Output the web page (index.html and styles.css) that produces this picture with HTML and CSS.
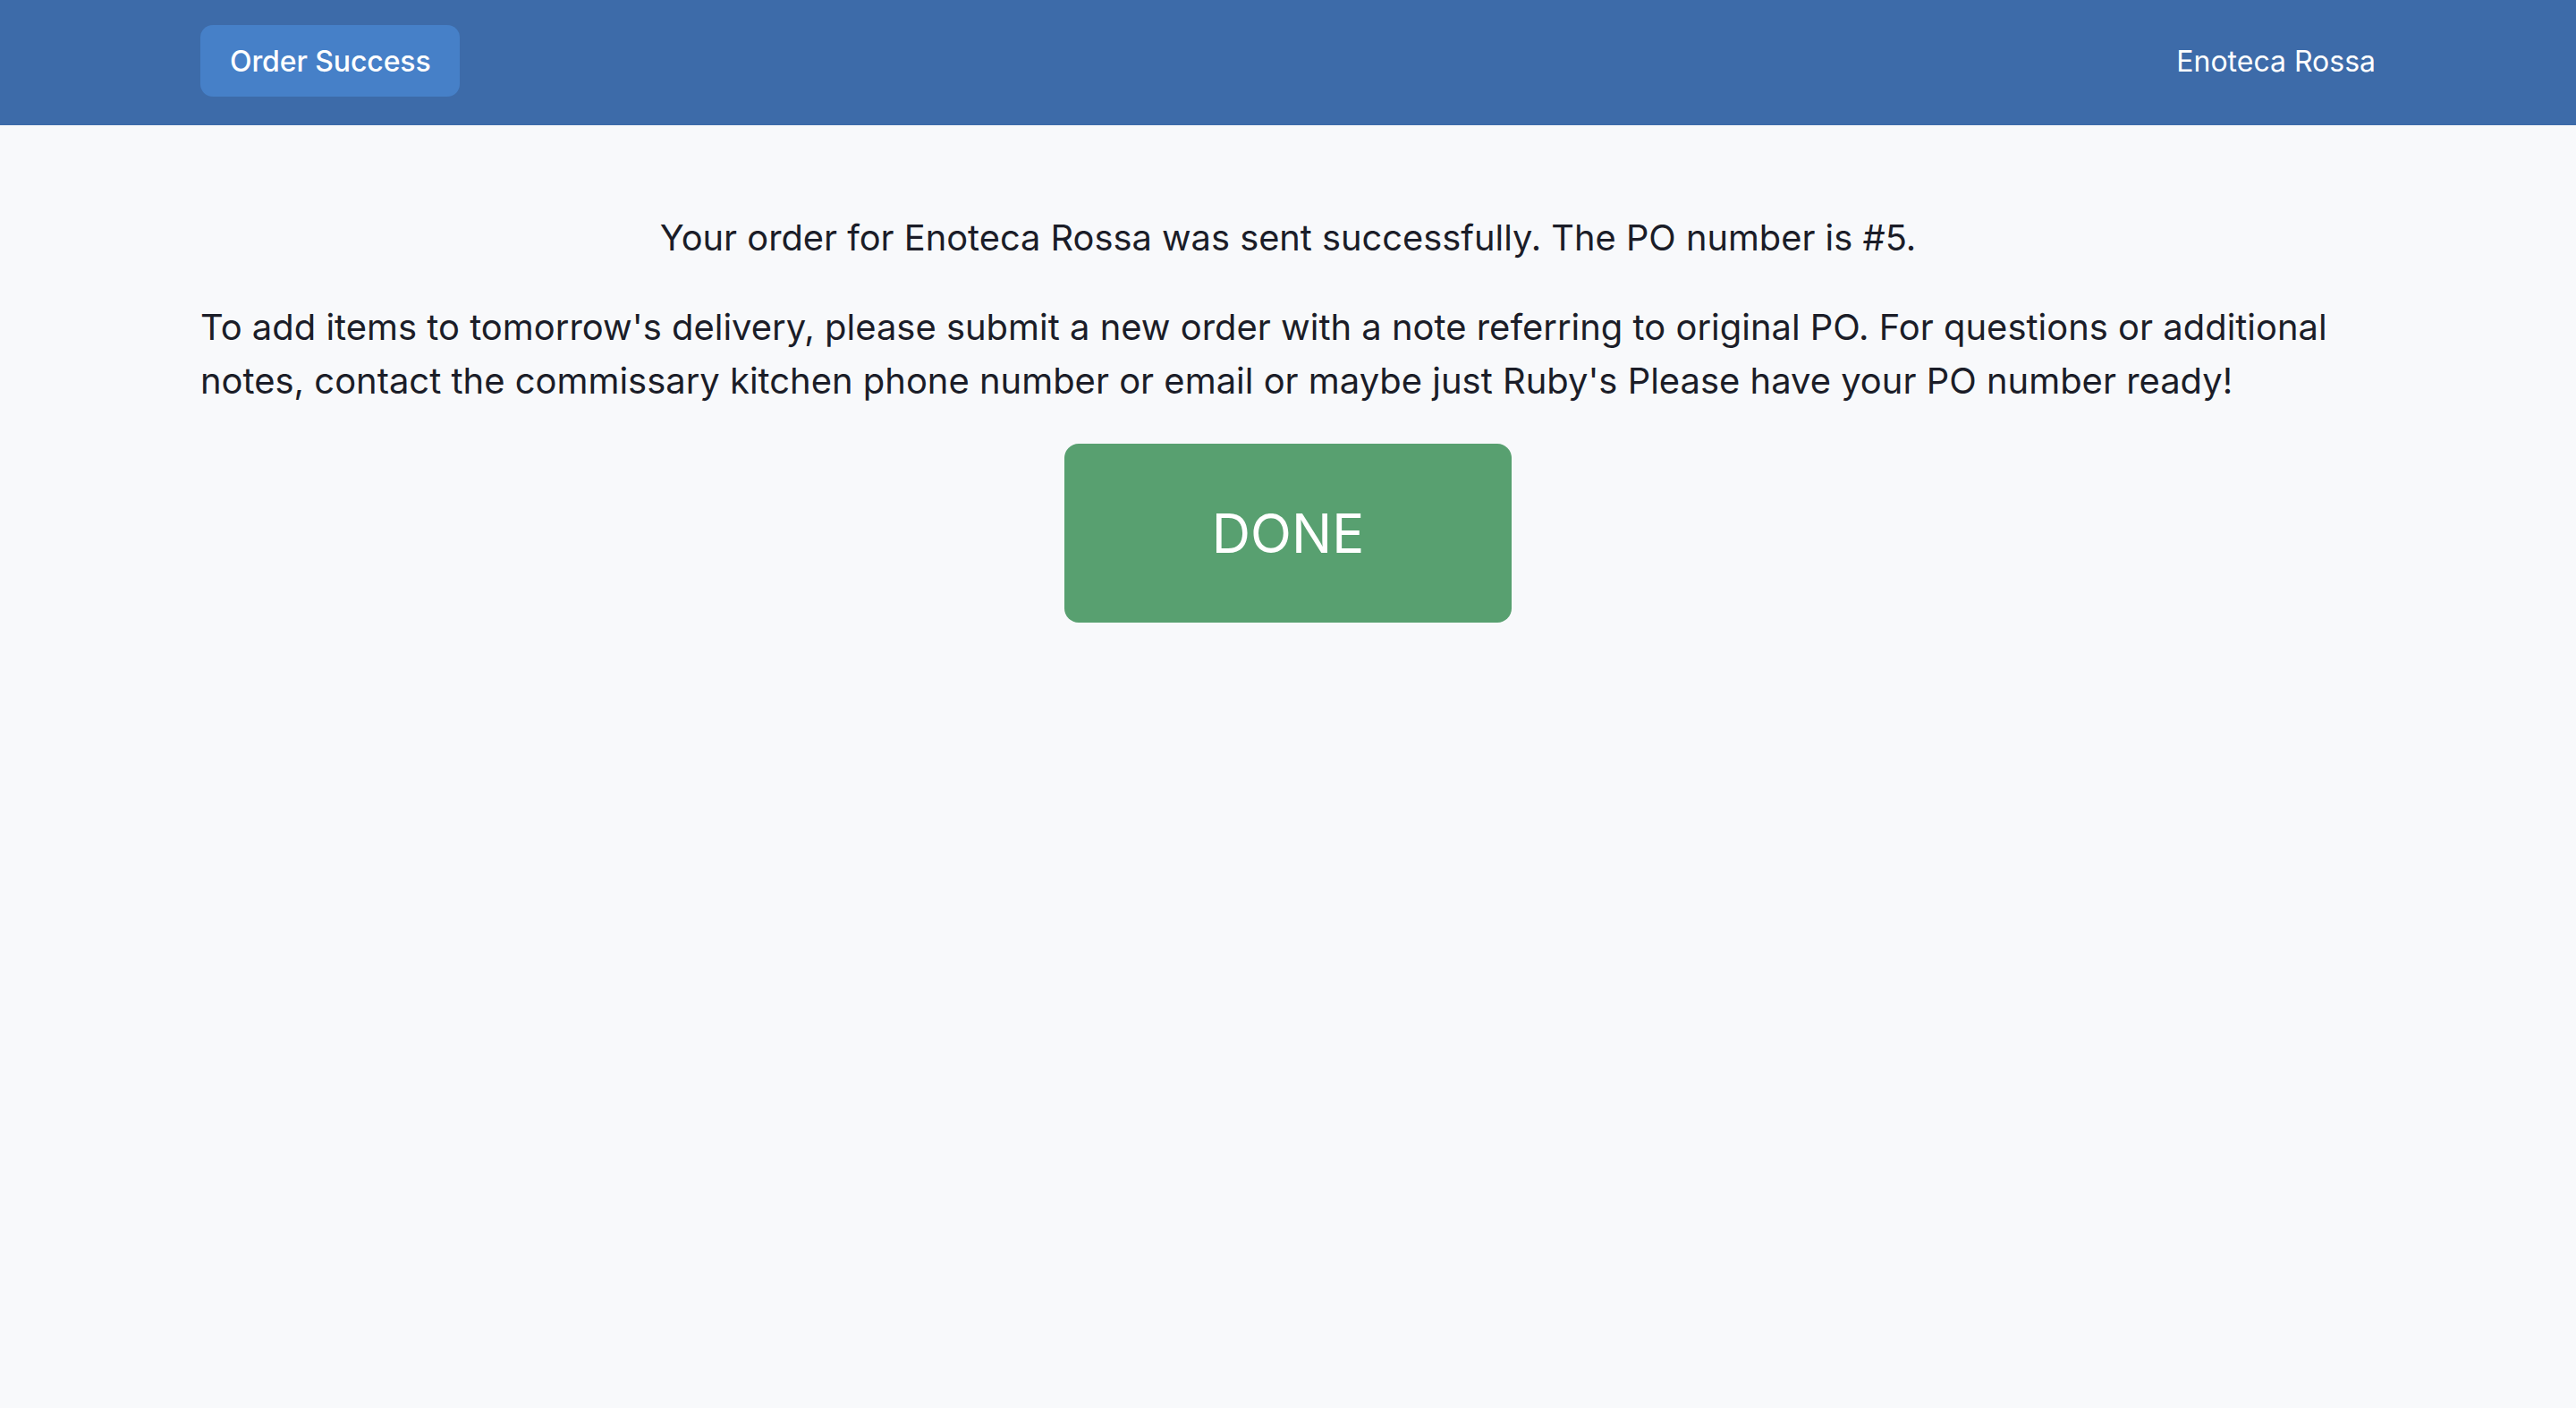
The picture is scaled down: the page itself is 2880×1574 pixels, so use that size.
FILE: index.html
```html
<!DOCTYPE html>
<html lang="en">
<head>
<meta charset="utf-8">
<title>Order Success</title>
<link rel="stylesheet" href="styles.css">
</head>
<body>
<header class="topbar">
  <div class="topbar-inner">
    <div class="badge">Order Success</div>
    <div class="store">Enoteca Rossa</div>
  </div>
</header>
<main class="content">
  <p class="lead">Your order for Enoteca Rossa was sent successfully. The PO number is #5.</p>
  <p class="note">To add items to tomorrow's delivery, please submit a new order with a note referring to original PO. For questions or additional notes, contact the commissary kitchen phone number or email or maybe just Ruby's Please have your PO number ready!</p>
  <div class="actions">
    <button class="done" type="button">DONE</button>
  </div>
</main>
</body>
</html>
```

FILE: styles.css
```css
* { box-sizing: border-box; }
html, body {
  margin: 0;
  padding: 0;
}
body {
  background: #f8f9fb;
  font-family: Inter, "Noto Sans", sans-serif;
  color: #1b1d28;
  min-height: 1574px;
}
.topbar {
  background: #3d6ba9;
  height: 140px;
  padding-bottom: 4px;
}
.topbar-inner {
  width: 2432px;
  margin: 0 auto;
  height: 100%;
  display: flex;
  align-items: center;
  justify-content: space-between;
}
.badge {
  background: #4680c8;
  color: #fff;
  height: 80px;
  padding: 0 32px 0 33px;
  border-radius: 14px;
  display: flex;
  align-items: center;
  font-size: 32px;
  font-weight: 500;
  letter-spacing: -0.1px;
}
.store {
  color: #fff;
  font-size: 32px;
}
.content {
  width: 2432px;
  margin: 0 auto;
  padding-top: 96px;
}
.lead, .note {
  margin: 0 0 40px;
  font-size: 39.8px;
  line-height: 60px;
}
.note { font-size: 39.95px; }
.lead { text-align: center; }
.actions {
  display: flex;
  justify-content: center;
}
.done {
  width: 500px;
  height: 200px;
  border: none;
  border-radius: 16px;
  background: #58a070;
  color: #fff;
  font-family: Inter, "Noto Sans", sans-serif;
  font-size: 60px;
  font-weight: 400;
  cursor: pointer;
}
```
